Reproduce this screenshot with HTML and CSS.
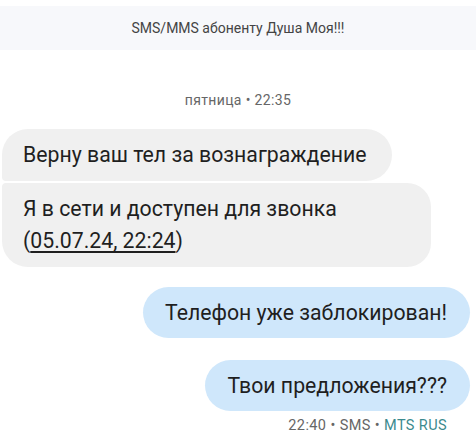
FILE: index.html
```html
<!DOCTYPE html>
<html lang="ru">
<head>
    <meta charset="UTF-8">
    <meta name="viewport" content="width=device-width, initial-scale=1.0">
    <title>SMS/MMS абоненту Душа Моя!!!</title>
    <link rel="stylesheet" href="styles.css">
</head>
<body>

<div class="chat">
    <div class="chat-header">SMS/MMS абоненту Душа Моя!!!</div>

    <div class="day-label">пятница • 22:35</div>

    <div class="msg-group incoming">
        <div class="bubble first">Верну ваш тел за вознаграждение</div>
        <div class="bubble last">Я в сети и доступен для звонка (<span class="link">05.07.24, 22:24</span>)</div>
    </div>

    <div class="msg-group outgoing">
        <div class="bubble">Телефон уже заблокирован!</div>
    </div>

    <div class="msg-group outgoing second">
        <div class="bubble">Твои предложения???</div>
    </div>

    <div class="msg-status">22:40 • SMS • <span class="sim">MTS RUS</span></div>
</div>

</body>
</html>
```

FILE: styles.css
```css
body {
    font-family: Roboto, "Noto Sans", sans-serif;
    background-color: #fff;
    color: #1f1f1f;
    margin: 0;
}
.chat {
    padding-top: 6px;
}
.chat-header {
    height: 44px;
    line-height: 44px;
    background-color: #f7f8fb;
    text-align: center;
    font-size: 14px;
    color: #444;
}
.day-label {
    margin-top: 40px;
    line-height: 20px;
    text-align: center;
    font-size: 14px;
    letter-spacing: 0.35px;
    color: #666;
}
.msg-group {
    display: flex;
    flex-direction: column;
    gap: 2px;
}
.incoming {
    align-items: flex-start;
    margin-top: 19px;
    padding-left: 2px;
}
.outgoing {
    align-items: flex-end;
    margin-top: 20px;
    padding-right: 6px;
}
.outgoing.second {
    margin-top: 22px;
}
.bubble {
    box-sizing: border-box;
    font-size: 21.25px;
    line-height: 32px;
    padding: 10px 26px 10px 21px;
    border-radius: 26px;
}
.incoming .bubble {
    max-width: 429px;
    background-color: #f0f0f0;
}
.incoming .first {
    border-bottom-left-radius: 4px;
}
.incoming .last {
    border-radius: 4px 24px 24px 26px;
}
.outgoing .bubble {
    background-color: #cfe7fb;
    line-height: 31px;
    padding: 10px 23px 10px 22px;
}
.link {
    text-decoration: underline;
    text-underline-offset: 3px;
}
.msg-status {
    margin-top: 7px;
    padding-right: 29px;
    text-align: right;
    font-size: 14.5px;
    letter-spacing: 0.4px;
    line-height: 16px;
    color: #666;
}
.sim {
    color: #3b8a8e;
}
```
